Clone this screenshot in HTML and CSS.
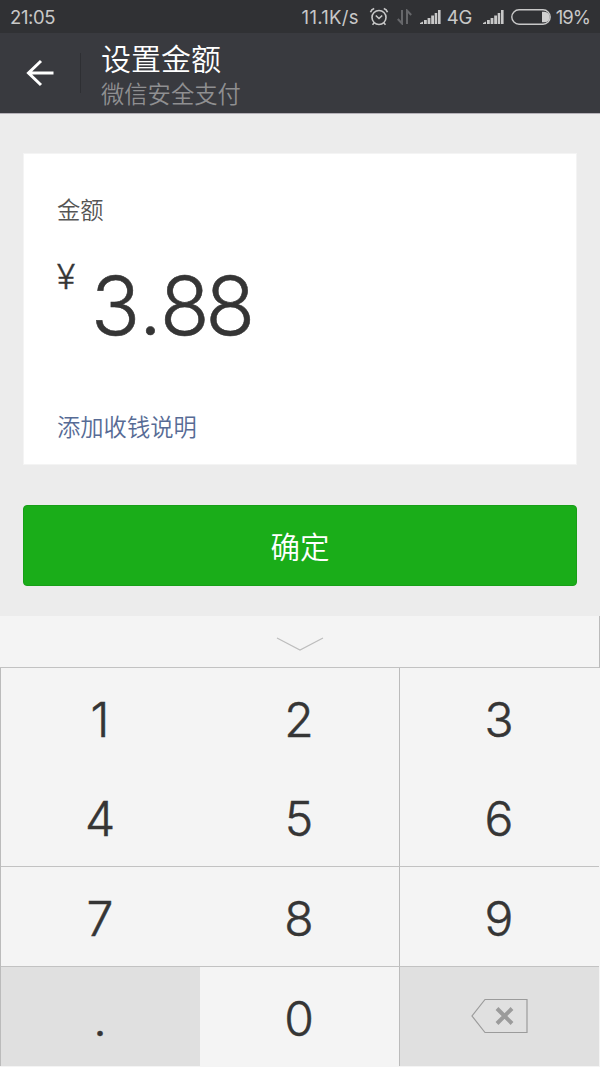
FILE: index.html
```html
<!DOCTYPE html>
<html lang="zh-CN">

<head>
    <meta charset="UTF-8">
    <meta name="viewport" content="width=device-width, initial-scale=1.0">
    <title>设置金额</title>
    <link rel="stylesheet" href="styles.css">
</head>

<body>
    <div id="app">
        <!-- 状态栏 -->
        <div class="status">
            <span class="time">21:05</span>
            <span class="speed">11.1K/s</span>
            <svg class="alarm" width="20" height="20" viewBox="0 0 20 20">
                <circle cx="10" cy="10.5" r="7" />
                <path d="M6.8 8.5l3.2 3 3.2-3M1.5 5.2Q2.3 2.3 5.2 1.5M18.5 5.2Q17.7 2.3 14.8 1.5M5.3 15.8l-1.8 2M14.7 15.8l1.8 2" />
            </svg>
            <svg class="data" width="15" height="16" viewBox="0 0 15 16">
                <path d="M5 1v13.5L.8 10M10 15V1.5L14.2 6" />
            </svg>
            <svg class="signal" width="21" height="15" viewBox="0 0 21 15">
                <path d="M0 14v-1l3-1.500V14zM4 10h2.800v4H4zM7.600 8h2.800v6H7.600zM11.200 5.500H14V14h-2.800zM14.700 3h2.500v11h-2.500zM18 0h2.600v14H18z" />
            </svg>
            <span class="net">4G</span>
            <svg class="signal second" width="21" height="15" viewBox="0 0 21 15">
                <path d="M0 14v-1l3-1.500V14zM4 10h2.800v4H4zM7.600 8h2.800v6H7.600zM11.200 5.500H14V14h-2.800zM14.700 3h2.500v11h-2.500zM18 0h2.600v14H18z" />
            </svg>
            <svg class="battery" width="40" height="16" viewBox="0 0 40 16">
                <rect x=".8" y=".8" width="38.400" height="14.400" rx="7.200" />
                <path d="M31 2.800h2.500a5.200 5.200 0 0 1 0 10.400H31z" />
            </svg>
            <span class="percent">19%</span>
        </div>

        <!-- 标题栏 -->
        <div class="header">
            <svg class="back" width="28" height="28" viewBox="0 0 28 28">
                <path d="M27.500 14H2.500M15 2L2.500 14 15 26" />
            </svg>
            <div class="titles">
                <h1>设置金额</h1>
                <p>微信安全支付</p>
            </div>
        </div>

        <div class="main">
            <div class="card">
                <div class="label">金额</div>
                <div class="amount">
                    <span class="yen">¥</span>
                    <span class="num">3<span class="dot">.</span>88</span>
                </div>
                <a class="note">添加收钱说明</a>
            </div>
            <button class="btn">确定</button>
        </div>

        <!-- 数字键盘 -->
        <div class="keyboard">
            <div class="fold">
                <svg width="48" height="16" viewBox="0 0 48 16">
                    <path d="M1 2l23 12L47 2" />
                </svg>
            </div>
            <div class="keys">
                <div class="key">1</div>
                <div class="key">2</div>
                <div class="key side">3</div>
                <div class="key">4</div>
                <div class="key">5</div>
                <div class="key side">6</div>
                <div class="key line">7</div>
                <div class="key line">8</div>
                <div class="key line side">9</div>
                <div class="key line gray">.</div>
                <div class="key line">0</div>
                <div class="key line side gray">
                    <svg class="del" width="58" height="36" viewBox="0 0 58 36">
                        <path d="M15 1.500h42v33H15L2 18z" />
                        <path class="cross" d="M27 10.500l15 15M42 10.500l-15 15" />
                    </svg>
                </div>
            </div>
        </div>
    </div>
</body>

</html>
```
FILE: styles.css
```css
* {
    margin: 0;
    padding: 0;
    box-sizing: border-box;
}

body {
    background-color: #ececec;
    font-family: Roboto, "Noto Sans CJK SC", sans-serif;
}

#app {
    width: 600px;
    height: 1067px;
    display: flex;
    flex-direction: column;
    overflow: hidden;
}

svg {
    display: block;
    fill: none;
}

.status {
    height: 33px;
    padding: 1px 10px 0;
    display: flex;
    align-items: center;
    background-color: #303134;
    color: #c8c8c8;
    font-family: Inter, sans-serif;
    font-size: 18.5px;
    font-weight: 400;
    letter-spacing: -0.4px;
}

.speed {
    margin-left: auto;
    letter-spacing: 0.3px;
}

.alarm {
    margin-left: 10px;
    stroke: #c8c8c8;
    stroke-width: 1.6;
}

.data {
    margin-left: 8px;
    stroke: #66676a;
    stroke-width: 2;
}

.signal {
    margin-left: 8px;
    fill: #c8c8c8;
}

.net {
    margin-left: 6px;
}

.second {
    margin-left: 11px;
}

.battery {
    margin-left: 7px;
    stroke: #c8c8c8;
    stroke-width: 1.4;
}

.battery path {
    fill: #d0d0d0;
    stroke: none;
}

.percent {
    margin-left: 5px;
    letter-spacing: -1px;
}

.header {
    height: 81px;
    display: flex;
    align-items: center;
    background-color: #393a3f;
    border-bottom: 1px solid #b5b1b8;
}

.back {
    margin-left: 26px;
    stroke: #fff;
    stroke-width: 3;
}

.titles {
    height: 40px;
    margin-left: 26px;
    padding: 7px 0 0 20px;
    border-left: 1px solid #2e2f33;
    display: flex;
    flex-direction: column;
    justify-content: center;
}

.titles h1 {
    color: #fff;
    font-size: 30px;
    font-weight: 350;
    line-height: 38px;
}

.titles p {
    color: #8f8f91;
    font-size: 23.3px;
    font-weight: 350;
    line-height: 33px;
}

.main {
    height: 502px;
    padding: 39px 23px 0;
}

.card {
    height: 312px;
    padding: 41px 33px 0;
    background-color: #fff;
    border: 1px solid #f4f4f4;
}

.label {
    color: #555;
    font-size: 23.3px;
    font-weight: 350;
    line-height: 32px;
}

.amount {
    height: 124px;
    margin-top: 28px;
    display: flex;
    align-items: flex-start;
    color: #353535;
}

.yen {
    width: 34px;
    font-size: 35px;
    font-weight: 350;
    line-height: 45px;
    -webkit-text-stroke: 0.5px #353535;
}

.num {
    font-family: Inter, sans-serif;
    font-size: 81px;
    font-weight: 300;
    line-height: 103px;
    letter-spacing: -4px;
    -webkit-text-stroke: 0.6px #353535;
}

.dot {
    margin: 0 2px 0 3px;
}

.note {
    display: block;
    margin-top: 33px;
    color: #576b95;
    font-size: 23.3px;
    font-weight: 350;
    line-height: 32px;
}

.btn {
    display: block;
    width: 100%;
    height: 81px;
    margin-top: 40px;
    padding-bottom: 2px;
    border: 1px solid #189f18;
    border-radius: 4px;
    background-color: #1aad19;
    color: #fff;
    font-family: inherit;
    font-size: 29.5px;
    font-weight: 350;
}

.keyboard {
    height: 451px;
    background-color: #f4f4f4;
}

.fold {
    height: 52px;
    padding-top: 5px;
    display: flex;
    justify-content: center;
    align-items: center;
    border-right: 1px solid #bbb;
    border-bottom: 1px solid #c2c2c2;
}

.fold svg {
    stroke: #bdbdbd;
    stroke-width: 1.2;
}

.keys {
    display: grid;
    grid-template-columns: 199px 199px 200px;
    grid-template-rows: 98px 100px 100px 100px;
    width: 599px;
    border-left: 1px solid #bbb;
}

.key {
    padding: 4px 2px 0 0;
    display: flex;
    justify-content: center;
    align-items: center;
    color: #353535;
    font-family: Inter, sans-serif;
    font-size: 48px;
    font-weight: 300;
    letter-spacing: -1px;
    -webkit-text-stroke: 0.5px #353535;
}

.line {
    padding-top: 3px;
    border-top: 1px solid #c2c2c2;
}

.side {
    border-left: 1px solid #bbb;
}

.gray {
    background-color: #e0e0e0;
}

.del {
    margin-top: -4px;
    stroke: #9b9b9b;
    stroke-width: 1.2;
}

.del .cross {
    stroke-width: 4;
}
```
